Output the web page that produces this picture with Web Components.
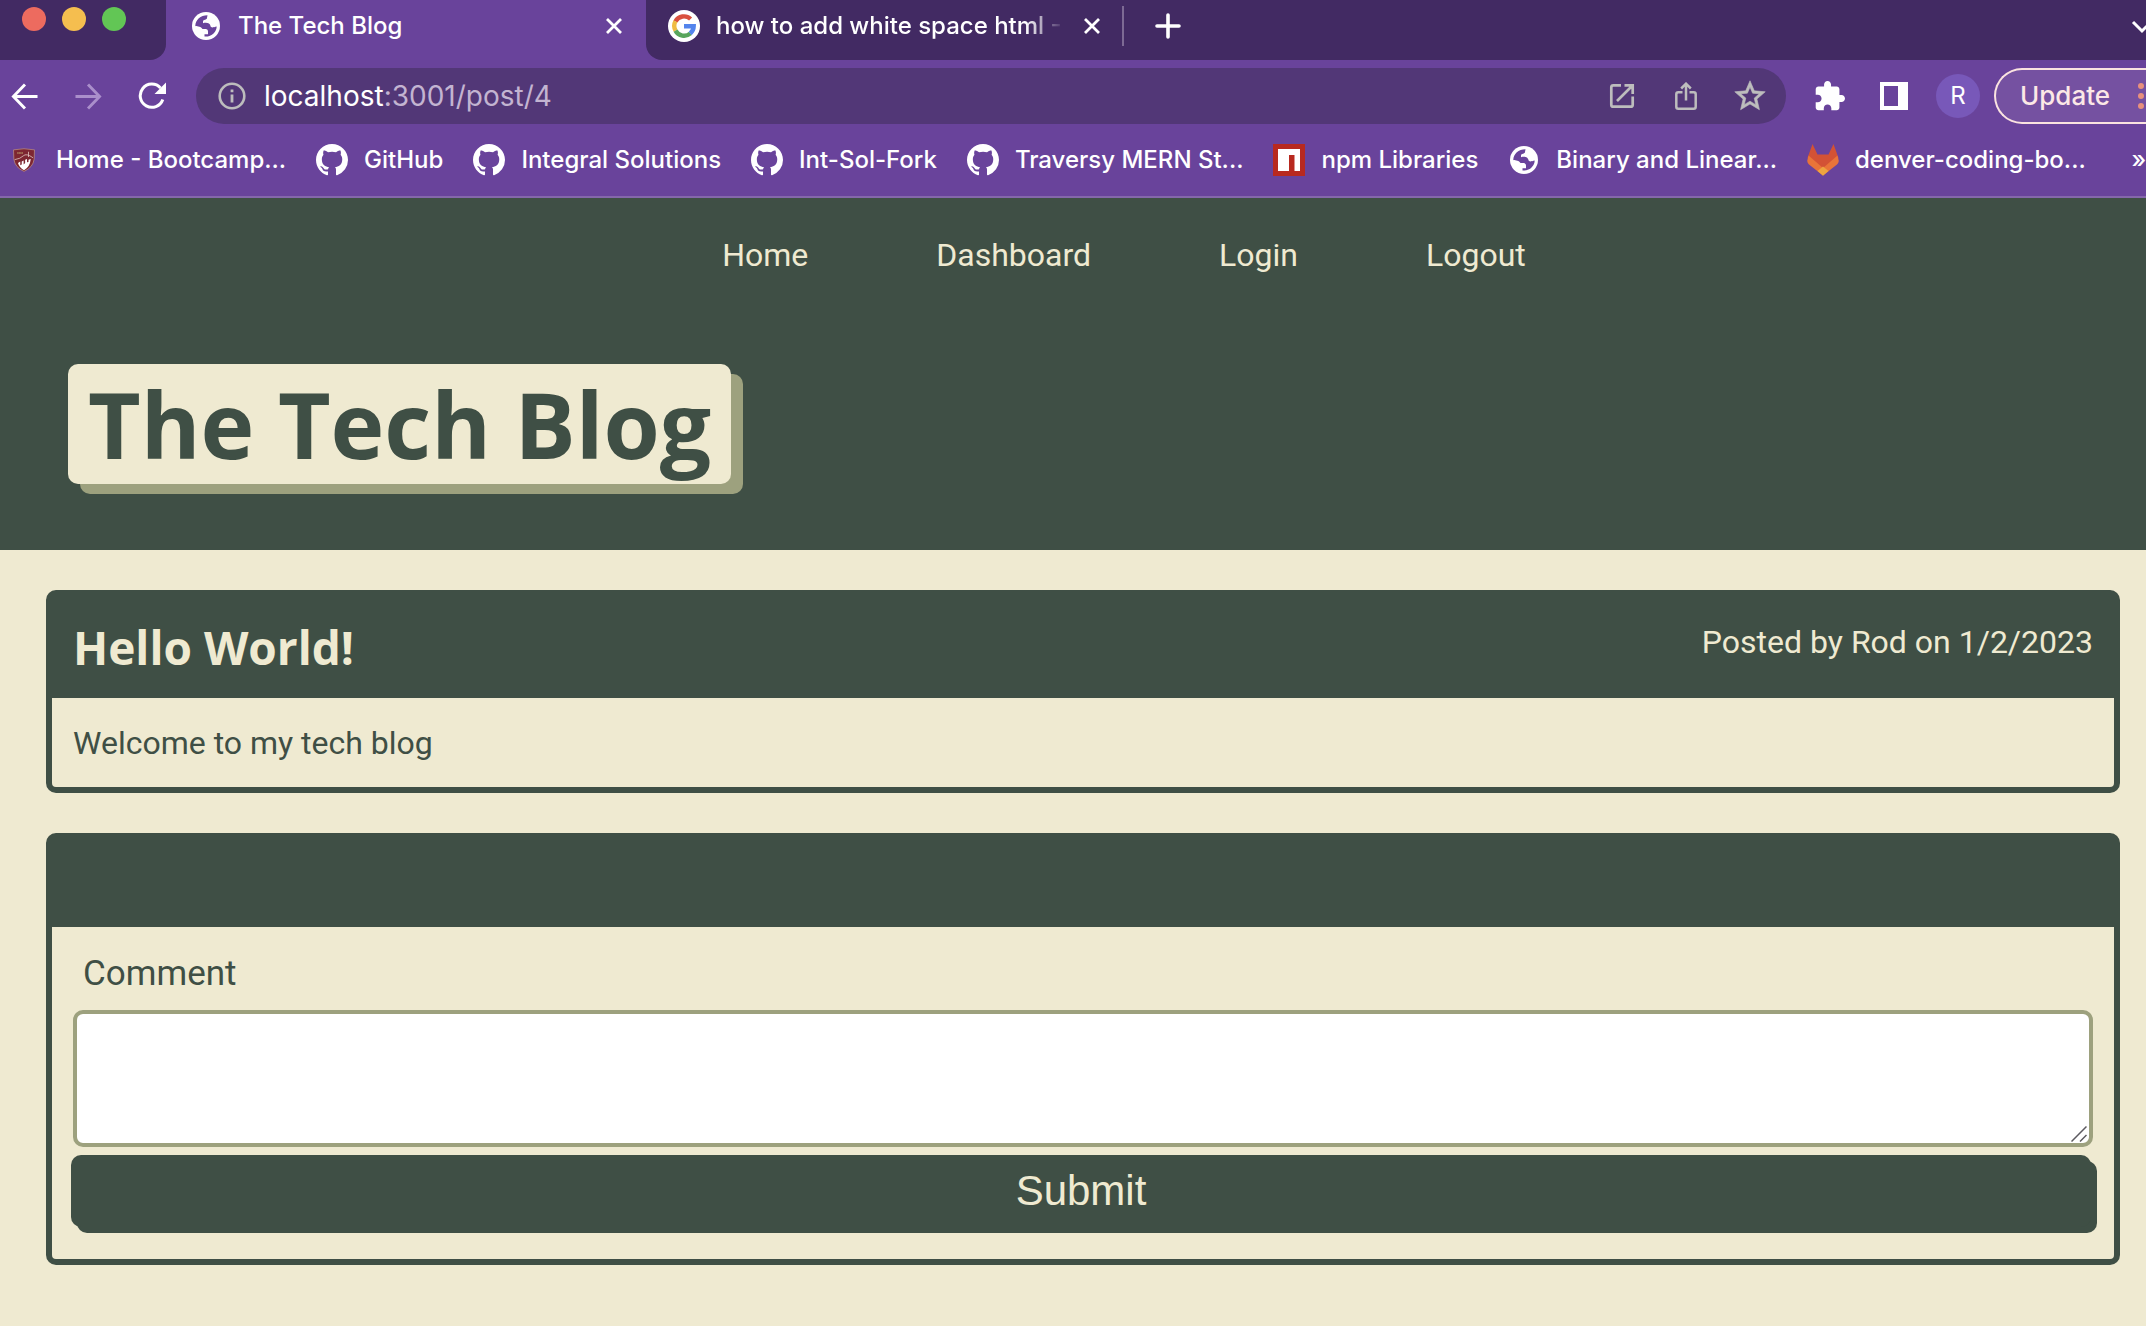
<!DOCTYPE html>
<html lang="en">
<head>
<meta charset="utf-8">
<title>The Tech Blog</title>
<style>
  :root {
    --dark: #3f4f45;
    --light: #efead1;
    --olive: #9da17e;
    --chrome: #69439b;
    --chrome-dark: #422a63;
    --chrome-field: #523777;
  }
  body {
    margin: 0;
    min-height: 100vh;
    background: var(--light);
    color: var(--dark);
    font: 32px/48px Roboto, "Liberation Sans", sans-serif;
    overflow-x: hidden;
  }
</style>
</head>
<body>
<browser-chrome>
  <browser-tab slot="tabs" active icon="globe">The Tech Blog</browser-tab>
  <browser-tab slot="tabs" icon="google">how to add white space html - Google</browser-tab>
  <book-mark slot="marks" icon="shield">Home - Bootcamp...</book-mark>
  <book-mark slot="marks" icon="github">GitHub</book-mark>
  <book-mark slot="marks" icon="github">Integral Solutions</book-mark>
  <book-mark slot="marks" icon="github">Int-Sol-Fork</book-mark>
  <book-mark slot="marks" icon="github">Traversy MERN St...</book-mark>
  <book-mark slot="marks" icon="npm">npm Libraries</book-mark>
  <book-mark slot="marks" icon="globe">Binary and Linear...</book-mark>
  <book-mark slot="marks" icon="gitlab">denver-coding-bo...</book-mark>
</browser-chrome>
<site-header>The Tech Blog</site-header>
<blog-main>
  <blog-card>
    <span slot="title">Hello World!</span>
    <span slot="meta">Posted by Rod on 1/2/2023</span>
    Welcome to my tech blog
  </blog-card>
  <blog-card>
    <comment-form></comment-form>
  </blog-card>
</blog-main>

<script>
const ICONS = {
  globe: ['0 0 28 28', '<circle cx="14" cy="14" r="14" fill="#fff"/><path fill="#69439b" d="M15.5 3.3 15 6C15 8 11 7.300 11 9.500V11.200C14.500 10 18 11 18.500 14 19 16 21 15.500 24.700 14.500 24.500 20 20 25 12.500 24.600V22.200H16V19.500C16 17 14 17 10.500 17 9 14.500 6 14.500 3.300 14 3.400 8 8.500 3.300 15.500 3.300Z"/>'],
  google: ['0 0 32 32', '<circle cx="16" cy="16" r="16" fill="#fff"/><g fill="none" stroke-width="4.400"><path stroke="#d9503f" d="M7.400 11.500A9.700 9.700 0 0 1 22.600 9"/><path stroke="#f0bc42" d="M7.600 20.700A9.700 9.700 0 0 1 7.400 11.300"/><path stroke="#58a55c" d="M22.400 23.400A9.700 9.700 0 0 1 7.500 20.600"/><path stroke="#5384ec" d="M16 16.300H25.700A9.700 9.700 0 0 1 22.200 23.500"/></g>'],
  github: ['0 0 16 16', '<path fill="#fff" d="M8 0C3.58 0 0 3.58 0 8c0 3.540 2.290 6.530 5.470 7.590.4.070.55-.17.55-.38 0-.19-.01-.82-.01-1.490-2.010.37-2.530-.49-2.690-.94-.09-.23-.48-.94-.82-1.130-.28-.15-.68-.52-.01-.53.63-.01 1.080.58 1.230.82.72 1.210 1.870.87 2.330.66.07-.52.28-.87.51-1.070-1.780-.2-3.640-.89-3.640-3.950 0-.87.31-1.590.82-2.150-.08-.2-.36-1.020.08-2.120 0 0 .67-.21 2.200.82.64-.18 1.320-.27 2-.27s1.360.09 2 .27c1.530-1.040 2.200-.82 2.200-.82.44 1.100.16 1.920.08 2.120.51.56.82 1.270.82 2.150 0 3.070-1.870 3.750-3.650 3.950.29.25.54.73.54 1.480 0 1.070-.01 1.930-.01 2.200 0 .21.15.46.55.38A8.010 8.010 0 0 0 16 8c0-4.420-3.580-8-8-8z"/>'],
  shield: ['0 0 32 32', '<path fill="#7d2631" stroke="#b98d84" stroke-width="1" d="M2 2.500Q16 -.5 30 2.500L29.500 15Q28 26 16 31.200 4 26 2.500 15Z"/><path fill="#fff" d="M8 20 11 18V23L13 22V18L15.500 16.500V22L17.500 20V15.500L20 14.500V19L22 18.500V15.500L25 14.500Q24 25 16 29.500 9.500 26 8 20Z"/><path fill="none" stroke="#e6cfc8" d="M3.500 15.500Q11 14.500 15 10.500T28 13M22 12V5"/><path stroke="#b18d62" d="M7 6.500H15" stroke-width="2" stroke-dasharray="1.500 .5"/>'],
  npm: ['0 0 32 32', '<path fill="#b8291f" d="M0 0H32V32H0Z"/><path fill="#fff" d="M5 5H27V27H21.500V11H16V27H5Z"/>'],
  gitlab: ['0 0 32 32', '<path fill="#d35235" d="M5.500 0 .5 14 16 31 31.500 14 26.500 0 21.500 10.500H10.500Z"/><path fill="#e97439" d="M1.500 11.500 16 24 30.500 11.500 31.800 17Q31.500 19 30 20.500L16 31.500 2 20.500Q.5 19 .2 17Z"/><path fill="#eda440" d="M16 22.500 21.500 27 16 31.800 10.500 27Z"/>'],
  close: ['0 0 28 28', '<path d="M7 7 21 21M21 7 7 21" stroke="#fff" stroke-width="2.800"/>'],
  plus: ['0 0 28 28', '<path d="M14 3V25M3 14H25" stroke="#fff" stroke-width="3.600" stroke-linecap="round"/>'],
  chevron: ['0 0 24 24', '<path d="M3 7 12 16 21 7" fill="none" stroke="#fff" stroke-width="3"/>'],
  back: ['0 0 28 28', '<path d="M27.500 14H3M14.500 1.500 2.500 14 14.500 26.500" fill="none" stroke="#fff" stroke-width="3"/>'],
  forward: ['0 0 28 28', '<path d="M.5 14H25M13.500 1.500 25.500 14 13.500 26.500" fill="none" stroke="#aa8fcb" stroke-width="3"/>'],
  reload: ['0 0 28 28', '<path d="M24.800 17.500A11.600 11.600 0 1 1 22.500 6" fill="none" stroke="#fff" stroke-width="3"/><path fill="#fff" d="M28 .5V12H16.500Z"/>'],
  info: ['0 0 28 28', '<circle cx="14" cy="14" r="12.300" fill="none" stroke="#bdbdbd" stroke-width="2.600"/><path d="M14 12.500V20.500M14 7.500V10.300" stroke="#bdbdbd" stroke-width="2.800"/>'],
  open: ['0 0 28 28', '<path d="M13 3.300H5.300Q3.300 3.300 3.300 5.300V22.700Q3.300 24.700 5.300 24.700H22.700Q24.700 24.700 24.700 22.700V14.500M9 19 23.500 4.500M16.500 3.300H24.700V12" fill="none" stroke="#bdbdbd" stroke-width="2.700"/><path fill="#bdbdbd" d="M19 2H26V9Z"/>'],
  share: ['0 0 28 28', '<path d="M10.500 10.300H6.300Q4.300 10.300 4.300 12.300V24.700Q4.300 26.700 6.300 26.700H21.700Q23.700 26.700 23.700 24.700V12.300Q23.700 10.300 21.700 10.300H17.500M14 18.500V2M9.200 6.500 14 1.700 18.800 6.500" fill="none" stroke="#bdbdbd" stroke-width="2.500"/>'],
  star: ['1.500 1.500 21 21', '<path fill="#bdbdbd" stroke="#bdbdbd" stroke-width=".4" d="m22 9.240-7.190-.62L12 2 9.190 8.630 2 9.240l5.460 4.730L5.820 21 12 17.270 18.180 21l-1.630-7.030L22 9.240zM12 15.400l-3.760 2.270 1-4.280-3.320-2.880 4.380-.38L12 6.100l1.710 4.040 4.380.38-3.320 2.880 1 4.280L12 15.400z"/>'],
  puzzle: ['1.500 1 21.500 21.500', '<path fill="#fff" d="M20.500 11H19V7c0-1.100-.9-2-2-2h-4V3.500C13 2.120 11.880 1 10.500 1S8 2.120 8 3.500V5H4c-1.100 0-1.990.9-1.990 2v3.800H3.500c1.490 0 2.700 1.210 2.700 2.700s-1.210 2.700-2.700 2.700H2V20c0 1.100.9 2 2 2h3.800v-1.500c0-1.490 1.210-2.700 2.700-2.700s2.700 1.210 2.700 2.700V22H17c1.100 0 2-.9 2-2v-4h1.500c1.380 0 2.500-1.120 2.500-2.500S21.880 11 20.500 11z"/>'],
  panel: ['0 0 28 28', '<path fill="#fff" fill-rule="evenodd" d="M0 0H28V28H0ZM4 4V24H18V4Z"/>'],
  dots: ['0 0 6 28', '<g fill="#e8907c"><circle cx="3" cy="4" r="3"/><circle cx="3" cy="14" r="3"/><circle cx="3" cy="24" r="3"/></g>'],
  grip: ['0 0 16 16', '<path d="M.5 15.500 15.500 .5M9 15.500 15.500 9" stroke="#5c5a60" stroke-width="1.500"/>'],
};
const icon = (name, w = 28, h = w) =>
  `<svg width="${w}" height="${h}" viewBox="${ICONS[name][0]}" aria-hidden="true">${ICONS[name][1]}</svg>`;

const BASE = `
  *, *::before { box-sizing: border-box; }
  svg { display: block; flex: none; }
  button { display: flex; align-items: center; justify-content: center; flex: none;
    margin: 0; padding: 0; border: 0; background: none; color: inherit; font: inherit; cursor: pointer; }
  a { color: inherit; text-decoration: none; }`;

class Base extends HTMLElement {
  constructor() {
    super();
    this.attachShadow({ mode: 'open' });
  }
  connectedCallback() {
    this.shadowRoot.innerHTML = `<style>${BASE}</style>` + this.render();
  }
}

customElements.define('browser-tab', class extends Base {
  render() {
    const active = this.hasAttribute('active');
    return `<style>
      :host { display: flex; align-items: center; flex: none; box-sizing: border-box; width: 476px; height: 60px;
        gap: 16px; padding: 0 16px 8px 22px; background: var(--chrome-dark); border-radius: 0 0 0 16px; }
      :host([active]) { width: 480px; gap: 18px; padding: 0 18px 8px 26px; background: none; }
      .title { flex: 1; min-width: 0; white-space: nowrap; overflow: hidden; }
      :host(:not([active])) .title {
        -webkit-mask-image: linear-gradient(90deg, #000 310px, transparent 348px);
        mask-image: linear-gradient(90deg, #000 310px, transparent 348px); }
      button { width: 28px; height: 28px; }
    </style>
    ${icon(this.getAttribute('icon'), active ? 28 : 32)}
    <span class="title"><slot></slot></span>
    <button aria-label="Close tab">${icon('close')}</button>`;
  }
});

customElements.define('book-mark', class extends Base {
  render() {
    const name = this.getAttribute('icon');
    const size = name === 'globe' || name === 'shield' ? 28 : 32;
    return `<style>
      :host { display: block; flex: none; }
      a { display: flex; align-items: center; gap: 16px; white-space: nowrap; }
      .icon { display: flex; justify-content: center; width: 32px; }
    </style>
    <a href="#"><span class="icon">${icon(name, name === 'shield' ? 24 : size, size)}</span><slot></slot></a>`;
  }
});

customElements.define('browser-chrome', class extends Base {
  render() {
    return `<style>
      :host { display: block; overflow: hidden; background: var(--chrome); color: #fff;
        font: 500 24px/32px Inter, "Liberation Sans", sans-serif; border-bottom: 2px solid #8567ab; }
      .strip { display: flex; height: 60px; }
      .lights { display: flex; justify-content: center; align-items: flex-start; gap: 16px; flex: none;
        width: 166px; padding: 7px 18px 0 0; background: var(--chrome-dark); border-radius: 0 0 16px 0; }
      .lights i { width: 24px; height: 24px; border-radius: 50%; }
      .rest { flex: 1; display: flex; align-items: center; height: 60px; padding-bottom: 8px; background: var(--chrome-dark); }
      .divider { width: 2px; height: 40px; background: #7d6a94; }
      .new { width: 28px; height: 28px; margin-left: 30px; }
      .more { width: 24px; height: 24px; margin: 2px -8px 0 auto; }
      .bar { display: flex; align-items: center; height: 72px; gap: 16px; }
      .bar > button { width: 48px; height: 48px; }
      .omni { flex: 1; display: flex; align-items: center; height: 56px; margin: 0 4px; padding: 0 20px 0 22px;
        border-radius: 28px; background: var(--chrome-field); }
      .url { flex: 1; margin-left: 18px; font-weight: 400; font-size: 28px; color: #c3b4d1; }
      .url b { font-weight: 400; color: #fff; }
      .omni button { width: 32px; height: 32px; margin-left: 32px; }
      .bar > .avatar { width: 44px; height: 44px; margin: 0 -2px 0 2px; border-radius: 50%; background: #7858b9; font-weight: 400; }
      .bar > .update { width: 152px; height: 56px; border: 2px solid #fbe3e0; border-right: 0; border-radius: 28px 0 0 28px;
        background: #7551a1; color: #fce8e6; font-size: 26px; justify-content: flex-start; padding-left: 24px; gap: 28px; }
      .marks { display: flex; align-items: center; height: 64px; padding: 0 0 8px 8px; gap: 30px; }
      .overflow { margin-left: auto; }
    </style>
    <div class="strip">
      <div class="lights"><i style="background:#ed6b5f"></i><i style="background:#f5be4f"></i><i style="background:#62c655"></i></div>
      <slot name="tabs"></slot>
      <div class="rest">
        <span class="divider"></span>
        <button class="new" aria-label="New tab">${icon('plus')}</button>
        <button class="more" aria-label="Search tabs">${icon('chevron', 24)}</button>
      </div>
    </div>
    <div class="bar">
      <button aria-label="Back">${icon('back', 27)}</button>
      <button aria-label="Forward">${icon('forward', 27)}</button>
      <button aria-label="Reload">${icon('reload')}</button>
      <div class="omni">
        ${icon('info')}
        <span class="url"><b>localhost</b>:3001/post/4</span>
        <button aria-label="Open in new">${icon('open')}</button>
        <button aria-label="Share">${icon('share')}</button>
        <button aria-label="Bookmark this page">${icon('star', 32)}</button>
      </div>
      <button aria-label="Extensions">${icon('puzzle', 30)}</button>
      <button aria-label="Side panel">${icon('panel')}</button>
      <button class="avatar">R</button>
      <button class="update">Update ${icon('dots', 6, 28)}</button>
    </div>
    <div class="marks"><slot name="marks"></slot><button class="overflow" aria-label="More bookmarks">»</button></div>`;
  }
});

customElements.define('site-header', class extends Base {
  render() {
    return `<style>
      :host { display: block; background: var(--dark); color: var(--light); padding: 33px 68px 66px; }
      nav { display: flex; justify-content: center; gap: 128px; padding-left: 102px; }
      h1 { width: fit-content; margin: 85px 0 0; padding: 0 20px; border-radius: 10px; background: var(--light); color: var(--dark);
        box-shadow: 12px 10px 0 var(--olive); font: 700 91px/120px "Open Sans", "Noto Sans", sans-serif; }
    </style>
    <nav><a href="#">Home</a><a href="#">Dashboard</a><a href="#">Login</a><a href="#">Logout</a></nav>
    <h1><slot></slot></h1>`;
  }
});

customElements.define('blog-main', class extends Base {
  render() {
    return `<style>
      :host { display: flex; flex-direction: column; gap: 40px; padding: 40px 26px 60px 46px; }
    </style><slot></slot>`;
  }
});

customElements.define('blog-card', class extends Base {
  render() {
    return `<style>
      :host { display: block; border: 6px solid var(--dark); border-radius: 10px; }
      header { display: flex; justify-content: space-between; align-items: flex-start; min-height: 88px;
        background: var(--dark); color: var(--light); }
      h2 { margin: 0; font: 700 46px/58px "Open Sans", "Noto Sans", sans-serif; }
      ::slotted([slot]) { display: block; padding: 22px 21px; }
      .body { padding: 21px 21px 20px; }
    </style>
    <header><h2><slot name="title"></slot></h2><slot name="meta"></slot></header>
    <div class="body"><slot></slot></div>`;
  }
});

customElements.define('comment-form', class extends Base {
  render() {
    return `<style>
      :host { display: block; margin: 0 0 12px -2px; }
      form { display: flex; flex-direction: column; }
      label { padding-left: 12px; font-size: 35px; line-height: 52px; }
      .field { position: relative; display: flex; margin: 10px 0 8px 2px; }
      .field svg { position: absolute; right: 6px; bottom: 5px; pointer-events: none; }
      textarea { flex: 1; height: 137px; border: 4px solid var(--olive); border-radius: 10px; background: #fff;
        font: inherit; color: inherit; resize: none; outline: 0; }
      button { height: 72px; margin-right: 2px; border-radius: 10px; background: var(--dark); color: var(--light);
        box-shadow: 6px 6px 0 var(--dark); font: 42px/48px "Liberation Sans", Arial, sans-serif; }
    </style>
    <form>
      <label for="comment">Comment</label>
      <div class="field"><textarea id="comment"></textarea>${icon('grip', 16)}</div>
      <button type="button">Submit</button>
    </form>`;
  }
});
</script>
</body>
</html>
